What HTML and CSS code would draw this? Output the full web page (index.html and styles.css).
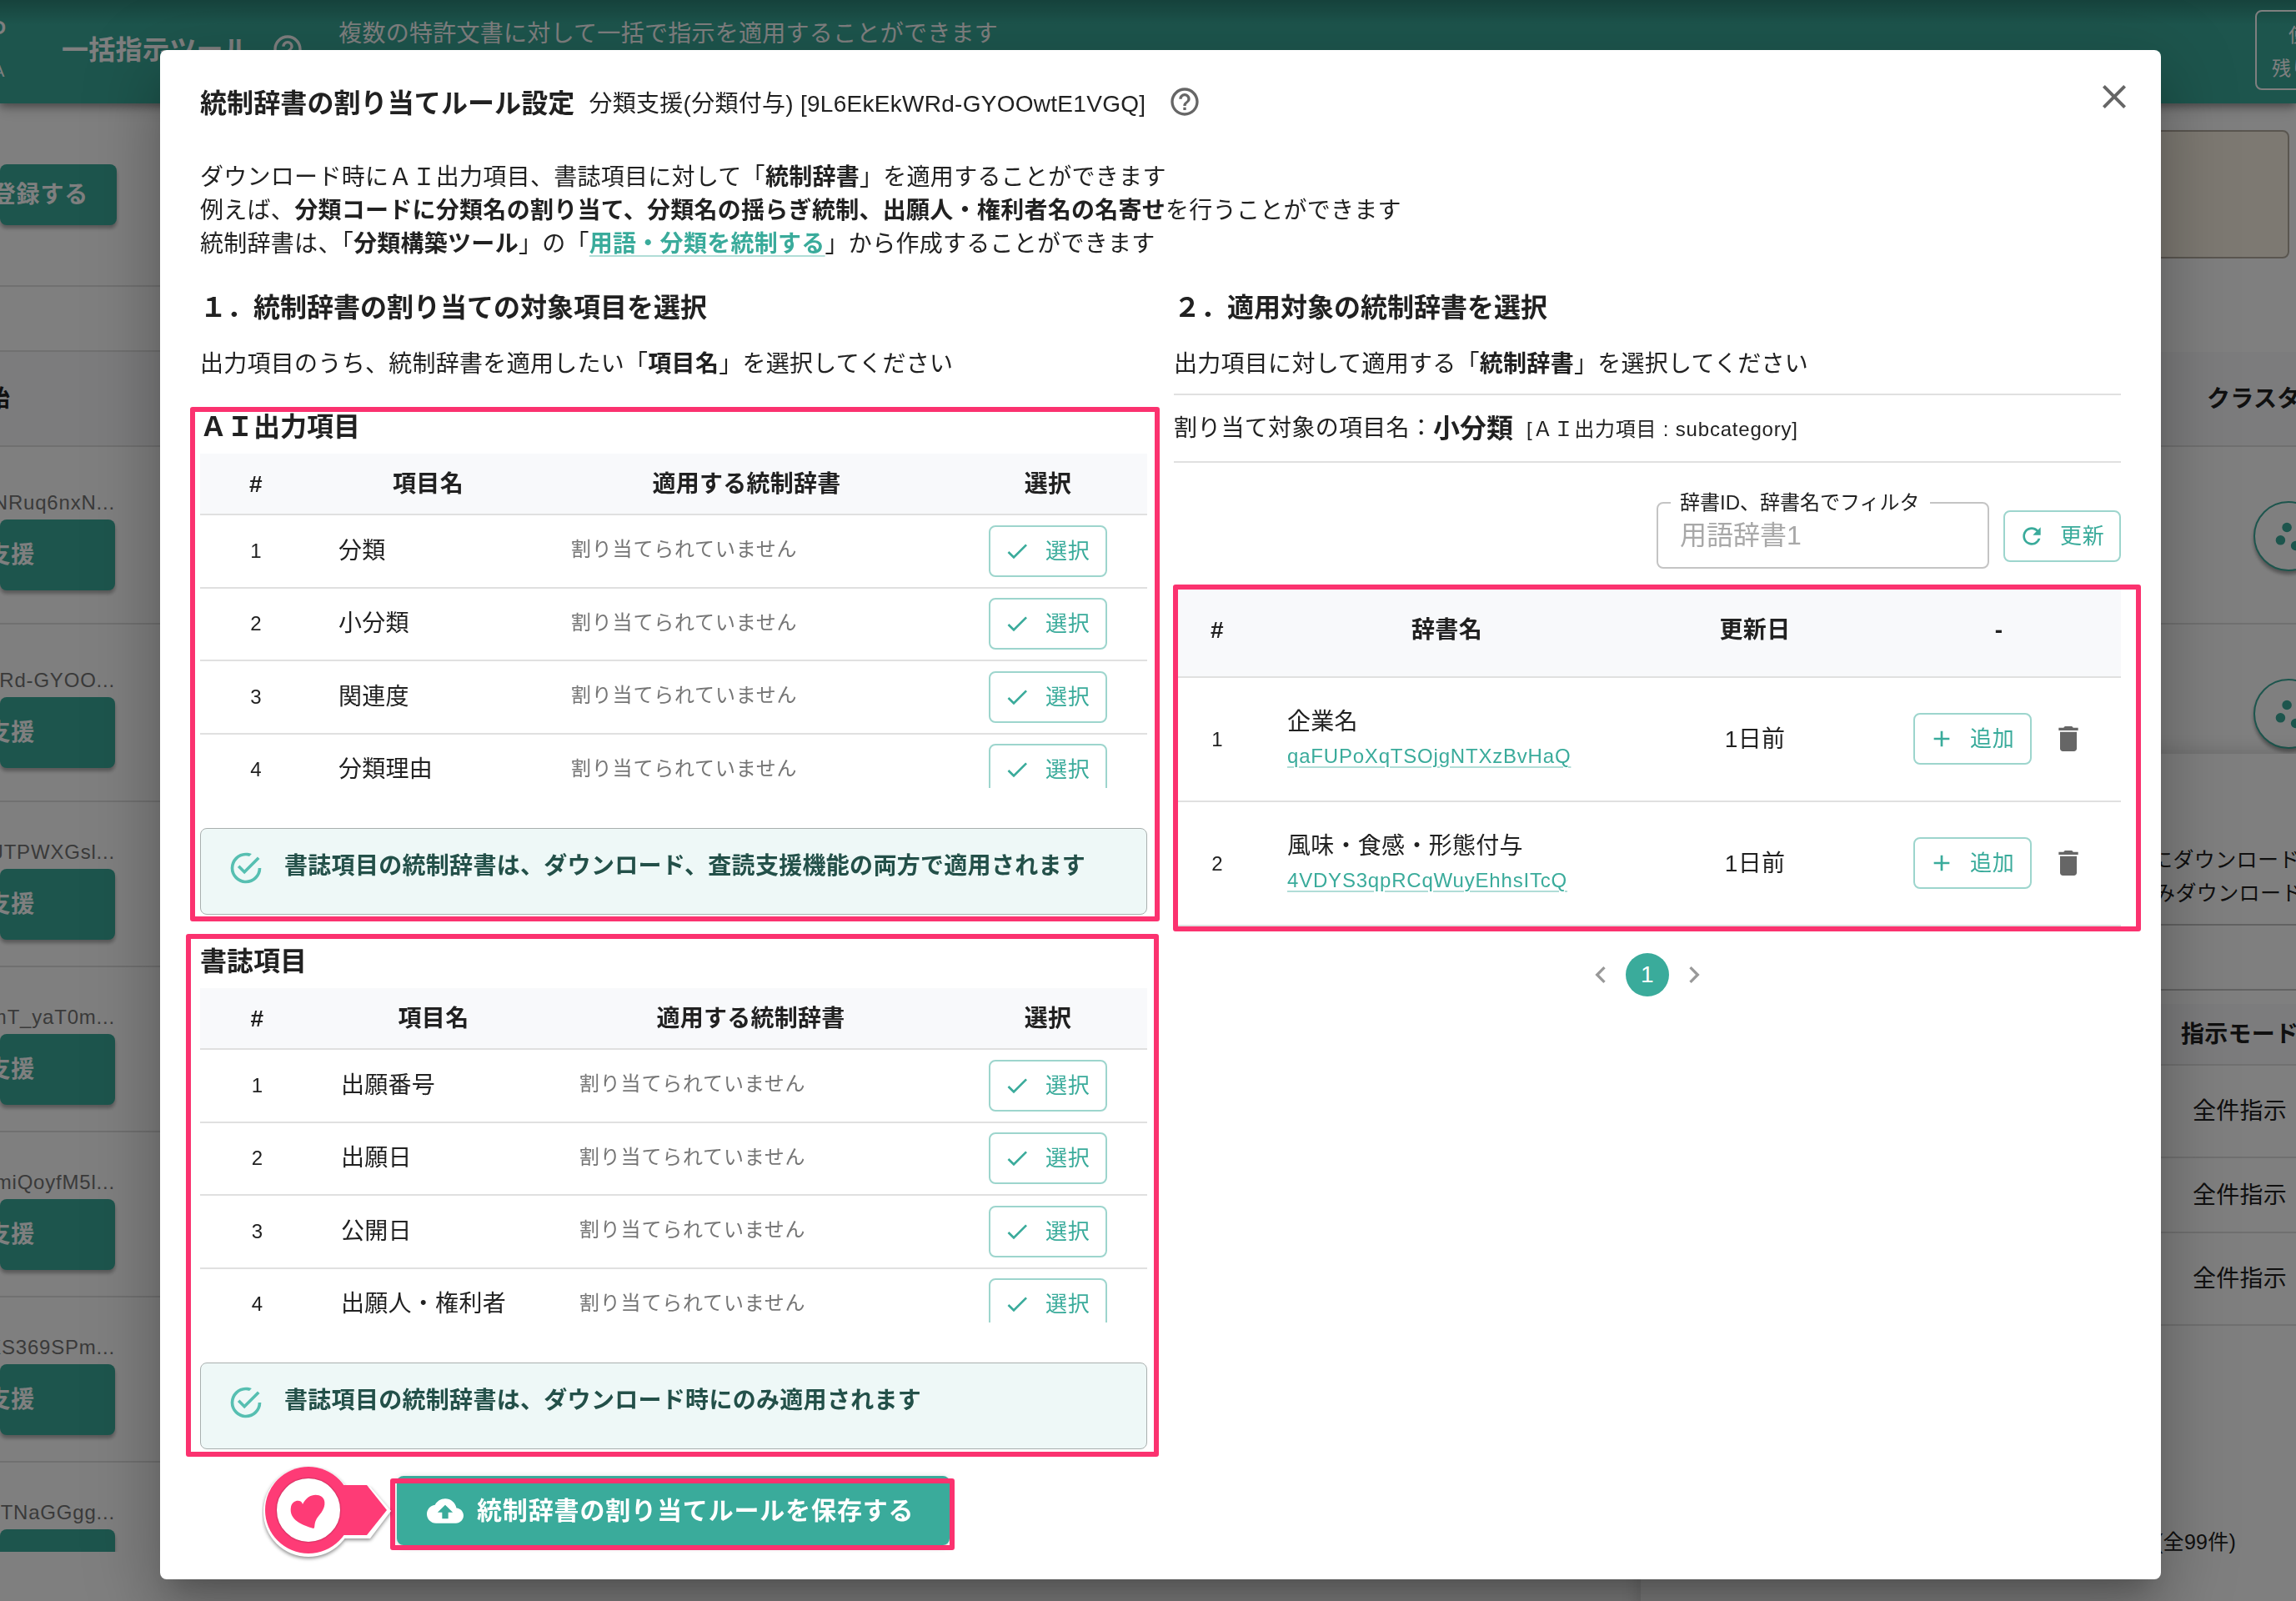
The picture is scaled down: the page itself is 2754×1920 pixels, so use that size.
FILE: index.html
```html
<!DOCTYPE html>
<html lang="ja">

<head>
    <meta charset="UTF-8">
    <meta name="viewport" content="width=device-width, initial-scale=1.0">
    <title>一括指示ツール</title>
    <link rel="stylesheet" href="styles.css">
</head>

<body>

    <!-- Shared icons -->
    <svg class="sprite" xmlns="http://www.w3.org/2000/svg">
        <symbol id="i-help" viewBox="0 0 24 24"><path d="M11 18h2v-2h-2v2zm1-16C6.48 2 2 6.48 2 12s4.48 10 10 10 10-4.48 10-10S17.52 2 12 2zm0 18c-4.41 0-8-3.59-8-8s3.59-8 8-8 8 3.59 8 8-3.59 8-8 8zm0-14c-2.21 0-4 1.79-4 4h2c0-1.1.9-2 2-2s2 .9 2 2c0 2-3 1.75-3 5h2c0-2.25 3-2.5 3-5 0-2.21-1.79-4-4-4z"/></symbol>
        <symbol id="i-close" viewBox="0 0 24 24"><path d="M19 6.41L17.59 5 12 10.59 6.41 5 5 6.41 10.59 12 5 17.59 6.41 19 12 13.41 17.59 19 19 17.59 13.41 12z"/></symbol>
        <symbol id="i-check" viewBox="0 0 24 24"><path d="M9 16.17L4.83 12l-1.42 1.41L9 19 21 7l-1.41-1.41z"/></symbol>
        <symbol id="i-add" viewBox="0 0 24 24"><path d="M19 13h-6v6h-2v-6H5v-2h6V5h2v6h6v2z"/></symbol>
        <symbol id="i-delete" viewBox="0 0 24 24"><path d="M6 19c0 1.1.9 2 2 2h8c1.1 0 2-.9 2-2V7H6v12zM19 4h-3.5l-1-1h-5l-1 1H5v2h14V4z"/></symbol>
        <symbol id="i-refresh" viewBox="0 0 24 24"><path d="M17.65 6.35C16.2 4.9 14.21 4 12 4c-4.42 0-7.99 3.58-7.99 8s3.57 8 7.99 8c3.73 0 6.84-2.55 7.73-6h-2.08c-.82 2.33-3.04 4-5.65 4-3.31 0-6-2.69-6-6s2.69-6 6-6c1.66 0 3.14.69 4.22 1.78L13 11h7V4l-2.35 2.35z"/></symbol>
        <symbol id="i-success" viewBox="0 0 24 24"><path d="M20,12A8,8 0 0,1 12,20A8,8 0 0,1 4,12A8,8 0 0,1 12,4C12.76,4 13.5,4.11 14.2,4.31L15.77,2.74C14.61,2.26 13.34,2 12,2A10,10 0 0,0 2,12A10,10 0 0,0 12,22A10,10 0 0,0 22,12M7.91,10.08L6.5,11.5L11,16L21,6L19.59,4.58L11,13.17L7.91,10.08Z"/></symbol>
        <symbol id="i-upload" viewBox="0 0 24 24"><path d="M19.35 10.04C18.67 6.59 15.64 4 12 4 9.11 4 6.6 5.64 5.35 8.04 2.34 8.36 0 10.91 0 14c0 3.31 2.69 6 6 6h13c2.76 0 5-2.24 5-5 0-2.64-2.05-4.78-4.65-4.96zM14 13v4h-4v-4H7l5-5 5 5h-3z"/></symbol>
        <symbol id="i-prev" viewBox="0 0 24 24"><path d="M15.41 7.41L14 6l-6 6 6 6 1.41-1.41L10.83 12z"/></symbol>
        <symbol id="i-next" viewBox="0 0 24 24"><path d="M10 6L8.59 7.41 13.17 12l-4.58 4.59L10 18l6-6z"/></symbol>
        <symbol id="i-cluster" viewBox="0 0 48 48"><circle cx="22" cy="12" r="6"/><circle cx="14" cy="28" r="6"/><circle cx="33" cy="35" r="6"/></symbol>
    </svg>

    <!-- Page behind the dialog -->
    <div class="page">
        <header class="app-bar">
            <div class="brand"><span class="brand-name">P</span><span class="brand-sub">A</span></div>
            <h1>一括指示ツール</h1>
            <svg class="icon help"><use href="#i-help"/></svg>
            <p>複数の特許文書に対して一括で指示を適用することができます</p>
            <div class="usage"><span>使用</span><span>残り</span></div>
        </header>

        <div class="content">
            <aside class="jobs">
                <div class="jobs-top"><button class="btn-fill">登録する</button></div>
                <div class="jobs-gap"></div>
                <div class="jobs-head">開始</div>
                <div class="job tall"><span>NRuq6nxN...</span><button class="btn-fill">査読支援</button></div>
                <div class="job tall"><span>Rd-GYOO...</span><button class="btn-fill">査読支援</button></div>
                <div class="job"><span>JTPWXGsl...</span><button class="btn-fill">査読支援</button></div>
                <div class="job"><span>mT_yaT0m...</span><button class="btn-fill">査読支援</button></div>
                <div class="job"><span>miQoyfM5l...</span><button class="btn-fill">査読支援</button></div>
                <div class="job"><span>XS369SPm...</span><button class="btn-fill">査読支援</button></div>
                <div class="job last"><span>TNaGGgg...</span><button class="btn-fill">査読支援</button></div>
            </aside>
            <section class="clusters">
                <div class="notice"></div>
                <div class="clusters-head">クラスタ</div>
                <div class="cluster"><span class="round"><svg><use href="#i-cluster"/></svg></span></div>
                <div class="cluster"><span class="round"><svg><use href="#i-cluster"/></svg></span></div>
            </section>
        </div>

        <div class="drawer">
            <div class="drawer-text">
                <p>にダウンロード</p>
                <p class="shift">みダウンロード</p>
            </div>
            <div class="drawer-gap"></div>
            <div class="drawer-head">指示モード</div>
            <div class="drawer-row">全件指示</div>
            <div class="drawer-row short">全件指示</div>
            <div class="drawer-row">全件指示</div>
            <div class="drawer-total">(全99件)</div>
        </div>
    </div>

    <div class="backdrop"></div>

    <!-- Dialog -->
    <div class="dialog">
        <div class="dialog-title">
            <h2>統制辞書の割り当てルール設定</h2>
            <span>分類支援(分類付与) [9L6EkEkWRd-GYOOwtE1VGQ]</span>
            <svg class="icon help"><use href="#i-help"/></svg>
            <svg class="icon close"><use href="#i-close"/></svg>
        </div>

        <div class="intro">
            <p>ダウンロード時にＡＩ出力項目、書誌項目に対して「<b>統制辞書</b>」を適用することができます</p>
            <p>例えば、<b>分類コードに分類名の割り当て、分類名の揺らぎ統制、出願人・権利者名の名寄せ</b>を行うことができます</p>
            <p>統制辞書は、「<b>分類構築ツール</b>」の「<a href="#"><b>用語・分類を統制する</b></a>」から作成することができます</p>
        </div>

        <div class="columns">
            <div class="column">
                <h3>１．統制辞書の割り当ての対象項目を選択</h3>
                <p class="lead">出力項目のうち、統制辞書を適用したい「<b>項目名</b>」を選択してください</p>

                <h3 class="group-title first">ＡＩ出力項目</h3>
                <div class="table-wrap">
                    <table class="items">
                        <colgroup><col class="c1"><col class="c2"><col class="c3"><col class="c4"></colgroup>
                        <tr><th>#</th><th>項目名</th><th>適用する統制辞書</th><th>選択</th></tr>
                        <tr><td class="num">1</td><td>分類</td><td class="none">割り当てられていません</td><td class="act"><button class="btn"><svg class="icon"><use href="#i-check"/></svg>選択</button></td></tr>
                        <tr><td class="num">2</td><td>小分類</td><td class="none">割り当てられていません</td><td class="act"><button class="btn"><svg class="icon"><use href="#i-check"/></svg>選択</button></td></tr>
                        <tr><td class="num">3</td><td>関連度</td><td class="none">割り当てられていません</td><td class="act"><button class="btn"><svg class="icon"><use href="#i-check"/></svg>選択</button></td></tr>
                        <tr><td class="num">4</td><td>分類理由</td><td class="none">割り当てられていません</td><td class="act"><button class="btn"><svg class="icon"><use href="#i-check"/></svg>選択</button></td></tr>
                    </table>
                </div>
                <div class="alert"><svg class="icon"><use href="#i-success"/></svg><b>書誌項目の統制辞書は、ダウンロード、査読支援機能の両方で適用されます</b></div>

                <h3 class="group-title">書誌項目</h3>
                <div class="table-wrap">
                    <table class="items biblio">
                        <colgroup><col class="c1"><col class="c2"><col class="c3"><col class="c4"></colgroup>
                        <tr><th>#</th><th>項目名</th><th>適用する統制辞書</th><th>選択</th></tr>
                        <tr><td class="num">1</td><td>出願番号</td><td class="none">割り当てられていません</td><td class="act"><button class="btn"><svg class="icon"><use href="#i-check"/></svg>選択</button></td></tr>
                        <tr><td class="num">2</td><td>出願日</td><td class="none">割り当てられていません</td><td class="act"><button class="btn"><svg class="icon"><use href="#i-check"/></svg>選択</button></td></tr>
                        <tr><td class="num">3</td><td>公開日</td><td class="none">割り当てられていません</td><td class="act"><button class="btn"><svg class="icon"><use href="#i-check"/></svg>選択</button></td></tr>
                        <tr><td class="num">4</td><td>出願人・権利者</td><td class="none">割り当てられていません</td><td class="act"><button class="btn"><svg class="icon"><use href="#i-check"/></svg>選択</button></td></tr>
                    </table>
                </div>
                <div class="alert"><svg class="icon"><use href="#i-success"/></svg><b>書誌項目の統制辞書は、ダウンロード時にのみ適用されます</b></div>

                <button class="save"><svg class="icon"><use href="#i-upload"/></svg>統制辞書の割り当てルールを保存する</button>
            </div>

            <div class="column">
                <h3>２．適用対象の統制辞書を選択</h3>
                <p class="lead">出力項目に対して適用する「<b>統制辞書</b>」を選択してください</p>

                <div class="target">割り当て対象の項目名：<b>小分類</b><small>[ＡＩ出力項目 : subcategory]</small></div>

                <div class="filter">
                    <fieldset>
                        <legend>辞書ID、辞書名でフィルタ</legend>
                        <span>用語辞書1</span>
                    </fieldset>
                    <button class="btn"><svg class="icon"><use href="#i-refresh"/></svg>更新</button>
                </div>

                <table class="dicts">
                    <colgroup><col class="c1"><col class="c2"><col class="c3"><col class="c4"></colgroup>
                    <tr><th>#</th><th>辞書名</th><th>更新日</th><th>-</th></tr>
                    <tr>
                        <td class="num">1</td>
                        <td>企業名<br><a href="#">qaFUPoXqTSOjgNTXzBvHaQ</a></td>
                        <td class="date">1日前</td>
                        <td><div class="actions"><button class="btn"><svg class="icon"><use href="#i-add"/></svg>追加</button><svg class="icon trash"><use href="#i-delete"/></svg></div></td>
                    </tr>
                    <tr>
                        <td class="num">2</td>
                        <td>風味・食感・形態付与<br><a href="#">4VDYS3qpRCqWuyEhhsITcQ</a></td>
                        <td class="date">1日前</td>
                        <td><div class="actions"><button class="btn"><svg class="icon"><use href="#i-add"/></svg>追加</button><svg class="icon trash"><use href="#i-delete"/></svg></div></td>
                    </tr>
                </table>

                <div class="pager">
                    <svg class="icon"><use href="#i-prev"/></svg>
                    <span>1</span>
                    <svg class="icon"><use href="#i-next"/></svg>
                </div>
            </div>
        </div>

        <!-- Highlight marks over the dialog -->
        <div class="mark mark-ai"></div>
        <div class="mark mark-biblio"></div>
        <div class="mark mark-dicts"></div>
        <div class="mark mark-save"></div>
        <svg class="pointer" viewBox="0 0 160 120">
            <g class="pointer-edge">
                <circle cx="56" cy="58" r="54"/>
                <path d="M90 28h40l25 29-25 33H90z"/>
            </g>
            <circle class="pink" cx="56" cy="56" r="52"/>
            <path class="pink" d="M90 26h36l24 30-24 30H90z"/>
            <circle class="hole" cx="56" cy="56" r="36"/>
            <path class="pink" d="M49 49C48 43 37 43 35 52c-3 16 14 22 27 26 3-1-1-7 7-16 8-9 8-18 3-22-7-5-18-2-23 9z"/>
        </svg>
    </div>

</body>

</html>
```
FILE: styles.css
```css
* {
    box-sizing: border-box;
}

body {
    margin: 0;
    width: 2754px;
    height: 1920px;
    overflow: hidden;
    position: relative;
    font-family: 'Liberation Sans', 'Noto Sans CJK JP', sans-serif;
    font-size: 28px;
    line-height: 40px;
    letter-spacing: 0.28px;
    color: #212121;
    background-color: #fff;
}

h1,
h2,
h3,
p {
    margin: 0;
}

h2,
h3 {
    font-size: 32px;
    line-height: 48px;
    letter-spacing: 0;
}

button {
    font-family: inherit;
    border: none;
    background: none;
    padding: 0;
    white-space: nowrap;
}

a {
    color: #3aab9b;
    text-decoration: underline;
    text-decoration-color: #b0ddd7;
    text-decoration-thickness: 2px;
    text-underline-offset: 4px;
}

.sprite {
    display: none;
}

.icon {
    width: 40px;
    height: 40px;
    fill: currentColor;
    flex-shrink: 0;
}

/* Page behind the dialog */
.page {
    height: 1920px;
    overflow: hidden;
    position: relative;
    white-space: nowrap;
}

.app-bar {
    height: 124px;
    display: flex;
    align-items: flex-start;
    background-color: #3aab9b;
    background-image: linear-gradient(rgba(0, 0, 0, 0.22), rgba(0, 0, 0, 0) 30px);
    color: #fff;
    box-shadow: 0 4px 8px rgba(0, 0, 0, 0.3), 0 8px 16px rgba(0, 0, 0, 0.15);
    position: relative;
}

.brand {
    width: 74px;
    display: flex;
    flex-direction: column;
}

.brand-name {
    margin: 17px 0 0 -16px;
    font-size: 36px;
    line-height: 44px;
}

.brand-sub {
    margin: 8px 0 0 -8px;
    font-size: 20px;
    line-height: 32px;
}

.app-bar h1 {
    margin-top: 36px;
    font-size: 32px;
    line-height: 48px;
    letter-spacing: 0.3px;
}

.app-bar .help {
    margin: 39px 0 0 25px;
}

.app-bar p {
    margin: 21px 0 0 41px;
}

.usage {
    margin: 12px -40px 0 auto;
    width: 89px;
    height: 96px;
    padding: 8px 0 0 18px;
    border: 2px solid #fff;
    border-radius: 8px;
    font-size: 23px;
    display: flex;
    flex-direction: column;
}

.usage span:first-child {
    padding-left: 20px;
}

.content {
    display: flex;
    justify-content: space-between;
}

.jobs {
    width: 400px;
}

.btn-fill {
    display: flex;
    align-items: center;
    justify-content: flex-end;
    padding-bottom: 5px;
    color: #fff;
    background-color: #3aab9b;
    border-radius: 8px;
    font-size: 28px;
    font-weight: bold;
    letter-spacing: 0.8px;
    box-shadow: 0 4px 4px rgba(0, 0, 0, 0.3);
}

.jobs-top {
    height: 220px;
    padding-top: 73px;
    border-bottom: 2px solid #e0e0e0;
}

.jobs-top .btn-fill {
    width: 140px;
    height: 73px;
    padding-right: 34px;
}

.jobs-gap {
    height: 78px;
    border-bottom: 2px solid #e0e0e0;
}

.jobs-head {
    height: 114px;
    width: 400px;
    padding: 37px 388px 0 0;
    display: flex;
    justify-content: flex-end;
    font-weight: bold;
    background-color: #f8f9fb;
    border-bottom: 2px solid #e0e0e0;
}

.job {
    height: 198px;
    padding-bottom: 31px;
    display: flex;
    flex-direction: column;
    justify-content: flex-end;
    border-bottom: 2px solid #e0e0e0;
}

.job.tall {
    height: 213px;
    padding-bottom: 39px;
}

.job span {
    width: 138px;
    display: flex;
    justify-content: flex-end;
    font-size: 24px;
    letter-spacing: 0.8px;
    color: #757575;
}

.job .btn-fill {
    width: 138px;
    height: 85px;
    padding-right: 96px;
}

.job.last {
    height: 107px;
    padding: 40px 0 0;
    justify-content: flex-start;
    overflow: hidden;
    border: none;
}

.job.last .btn-fill {
    flex-shrink: 0;
}

.clusters {
    width: 787px;
}

.notice {
    height: 154px;
    margin: 32px 8px 112px 0;
    border: 2px solid #b4ada0;
    border-radius: 8px;
    background-color: #faf3e5;
}

.clusters-head {
    height: 114px;
    padding: 37px 0 0 680px;
    font-weight: bold;
    background-color: #f8f9fb;
    border-bottom: 2px solid #e0e0e0;
}

.cluster {
    height: 213px;
    padding: 65px 0 0 736px;
    border-bottom: 2px solid #e0e0e0;
}

.round {
    display: flex;
    width: 84px;
    height: 84px;
    padding: 17px;
    border: 2px solid #3aab9b;
    border-radius: 50%;
    box-shadow: 0 4px 4px rgba(0, 0, 0, 0.35);
    background-color: #fff;
}

.round svg {
    width: 48px;
    height: 48px;
    fill: #3aab9b;
}

.drawer {
    position: absolute;
    left: 1968px;
    top: 904px;
    width: 820px;
    height: 1040px;
    background-color: #fff;
    box-shadow: 0 0 24px rgba(0, 0, 0, 0.2);
}

.drawer-text {
    height: 206px;
    padding: 107px 0 0 613px;
    border-bottom: 2px solid #c4c4c4;
    font-size: 25px;
    letter-spacing: 0.4px;
}

.drawer-text .shift {
    padding-left: 3px;
}

.drawer-gap {
    height: 78px;
    border-bottom: 2px solid #c4c4c4;
    margin-bottom: 16px;
}

.drawer-head {
    height: 74px;
    padding: 17px 0 0 648px;
    font-weight: bold;
    background-color: #f8f9fb;
    border-bottom: 2px solid #e0e0e0;
}

.drawer-row {
    height: 111px;
    display: flex;
    align-items: center;
    padding: 1px 0 0 662px;
    border-bottom: 2px solid #e0e0e0;
}

.drawer-row.short {
    height: 90px;
}

.drawer-total {
    padding: 239px 0 0 618px;
    font-size: 25px;
}

.backdrop {
    position: fixed;
    inset: 0;
    background-color: rgba(0, 0, 0, 0.5);
}

/* Dialog */
.dialog {
    position: absolute;
    left: 192px;
    top: 60px;
    width: 2400px;
    height: 1834px;
    padding: 0 48px;
    background-color: #fff;
    border-radius: 8px;
    box-shadow: 0 22px 30px -14px rgba(0, 0, 0, 0.2), 0 48px 76px 6px rgba(0, 0, 0, 0.14), 0 18px 92px 16px rgba(0, 0, 0, 0.12);
}

.dialog-title {
    height: 126px;
    display: flex;
    align-items: center;
}

.dialog-title h2 {
    padding-top: 1px;
    letter-spacing: 0.1px;
}

.dialog-title span {
    margin-left: 17px;
    padding-top: 4px;
}

.dialog-title .help {
    margin: -2px 0 0 27px;
    color: #666;
}

.dialog-title .close {
    width: 48px;
    height: 48px;
    margin: -14px -16px 0 auto;
    color: #666;
}

.intro {
    margin-top: 7px;
}

.columns {
    display: flex;
    gap: 32px;
    margin-top: 32px;
}

.column {
    width: 1136px;
}

.lead {
    margin-top: 24px;
}

.group-title {
    margin: 32px 0 8px;
}

.group-title.first {
    margin-top: 31px;
}

.table-wrap {
    height: 401px;
    overflow: hidden;
}

table {
    width: 100%;
    table-layout: fixed;
    border-collapse: separate;
    border-spacing: 0;
}

th {
    height: 74px;
    padding: 2px 0 0;
    background-color: #f8f9fb;
    border-bottom: 2px solid #e0e0e0;
}

td {
    height: 87.5px;
    padding: 0 0 0 32px;
    border-bottom: 2px solid #e0e0e0;
}

.num {
    padding: 0;
    text-align: center;
    font-size: 24px;
}

.none {
    padding-bottom: 3px;
    font-size: 24px;
    letter-spacing: 0.8px;
    color: #757575;
}

.act {
    padding: 0;
}

.items .c1 { width: 134px; }
.items .c2 { width: 279px; }
.items .c3 { width: 485px; }
.items .c4 { width: 238px; }

.biblio .c1 { width: 137px; }
.biblio .c2 { width: 286px; }
.biblio .c3 { width: 475px; }

.btn {
    display: flex;
    align-items: center;
    width: 142px;
    height: 62px;
    padding: 0 0 5px 16px;
    border: 2px solid #9dd5cd;
    border-radius: 8px;
    color: #3aab9b;
    font-size: 26px;
    letter-spacing: 0.7px;
}

.btn .icon {
    width: 32px;
    height: 32px;
    margin: 5px 18px 0 0;
}

.act .btn {
    margin: 0 auto;
}

.alert {
    display: flex;
    height: 104px;
    margin-top: 48px;
    padding: 25px 32px;
    border: 1px solid #a9b0af;
    border-radius: 8px;
    background-color: #eef8f7;
    color: #235049;
}

.alert .icon {
    width: 44px;
    height: 44px;
    margin-right: 24px;
    color: #56bfb1;
}

.alert b {
    letter-spacing: 0.3px;
}

.save {
    display: flex;
    align-items: center;
    width: 663px;
    height: 83px;
    margin: 32px 0 0 236px;
    padding: 0 0 6px 36px;
    border-radius: 8px;
    background-color: #3aab9b;
    box-shadow: 0 2px 8px rgba(0, 0, 0, 0.2);
    color: #fff;
    font-size: 30px;
    font-weight: bold;
    letter-spacing: 0.85px;
}

.save .icon {
    width: 44px;
    height: 44px;
    margin: 6px 16px 0 0;
}

/* Dictionary column */
.target {
    display: flex;
    align-items: center;
    height: 83px;
    margin-top: 15px;
    border-top: 2px solid #e0e0e0;
    border-bottom: 2px solid #e0e0e0;
}

.target b {
    font-size: 32px;
    letter-spacing: 0;
}

.target small {
    margin-left: 16px;
    padding-top: 3px;
    font-size: 24px;
    letter-spacing: 0.8px;
}

.filter {
    display: flex;
    justify-content: flex-end;
    align-items: flex-start;
    margin-top: 36px;
    height: 112px;
}

.filter fieldset {
    width: 399px;
    height: 91px;
    margin: 0 17px 0 0;
    padding: 0 0 0 15px;
    border: 2px solid #c4c4c4;
    border-radius: 8px;
}

.filter legend {
    width: 311px;
    margin: 0;
    padding: 0 11px;
    font-size: 24px;
    line-height: 24px;
    letter-spacing: 0;
    white-space: nowrap;
}

.filter span {
    display: block;
    margin: 7px 0 0 11px;
    font-size: 32px;
    letter-spacing: 0;
    color: #a8a8a8;
}

.filter .btn {
    width: 141px;
    margin-top: 21px;
}

.dicts th {
    height: 110px;
    padding: 0 0 3px;
}

.dicts td {
    height: 149px;
}

.dicts td a {
    font-size: 24px;
    letter-spacing: 0.8px;
}

.dicts .num {
    padding: 0;
}

.dicts .date {
    padding: 0;
    text-align: center;
}

.dicts .c1 { width: 104px; }
.dicts .c2 { width: 447px; }
.dicts .c3 { width: 292px; }
.dicts .c4 { width: 293px; }

.actions {
    display: flex;
    align-items: center;
    padding: 0 0 1px 12px;
}

.trash {
    margin-left: 24px;
    color: #666;
}

.pager {
    display: flex;
    justify-content: center;
    align-items: center;
    gap: 10px;
    margin-top: 32px;
}

.pager .icon {
    color: #999;
}

.pager span {
    width: 52px;
    height: 52px;
    border-radius: 50%;
    background-color: #3aab9b;
    color: #fff;
    line-height: 52px;
    text-align: center;
}

/* Highlight marks */
.mark {
    position: absolute;
    border: 6px solid #fb326f;
    border-radius: 3px;
}

.mark-ai {
    left: 36px;
    top: 428px;
    width: 1163px;
    height: 617px;
}

.mark-biblio {
    left: 31px;
    top: 1060px;
    width: 1167px;
    height: 627px;
}

.mark-dicts {
    left: 1215px;
    top: 641px;
    width: 1161px;
    height: 416px;
}

.mark-save {
    left: 276px;
    top: 1713px;
    width: 677px;
    height: 86px;
}

.pointer {
    position: absolute;
    left: 122px;
    top: 1695px;
    width: 160px;
    height: 120px;
}

.pointer-edge {
    fill: #fff;
    filter: drop-shadow(0 2px 2px rgba(0, 0, 0, 0.45));
}

.pink {
    fill: #fe3b76;
}

.hole {
    fill: #fff;
    stroke: #fff;
    stroke-width: 4px;
    filter: drop-shadow(0 0 1px rgba(0, 0, 0, 0.4));
}
```
